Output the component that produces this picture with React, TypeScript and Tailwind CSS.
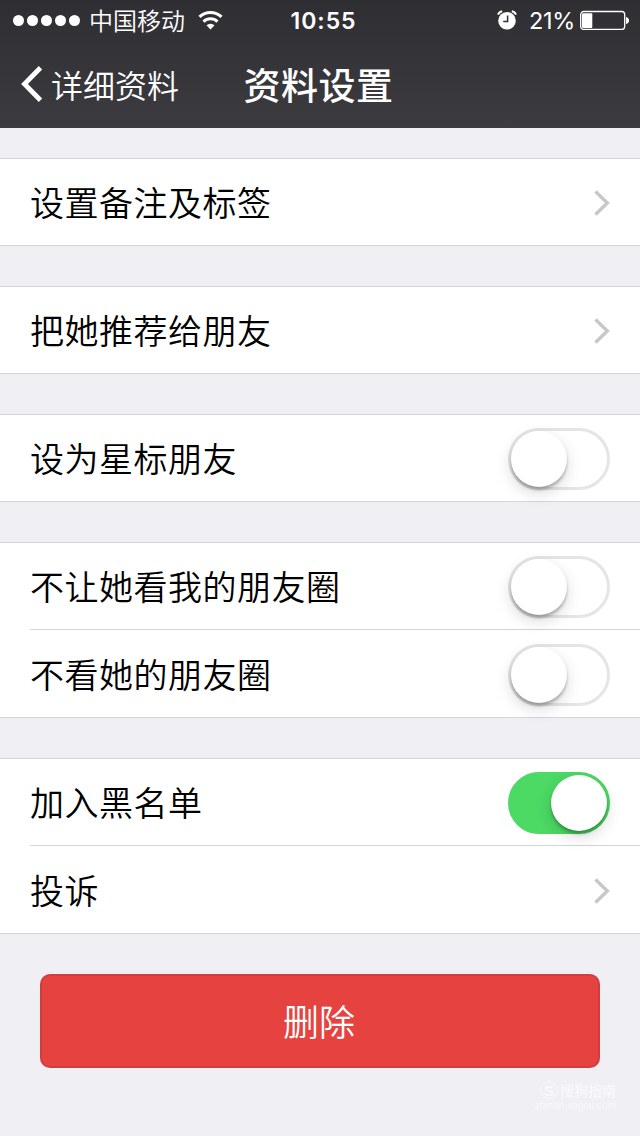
import React, { useState } from 'react';

type Item = {
  label: string;
  kind: 'link' | 'switch';
  on?: boolean;
};

const groups: Item[][] = [
  [{ label: '设置备注及标签', kind: 'link' }],
  [{ label: '把她推荐给朋友', kind: 'link' }],
  [{ label: '设为星标朋友', kind: 'switch' }],
  [
    { label: '不让她看我的朋友圈', kind: 'switch' },
    { label: '不看她的朋友圈', kind: 'switch' },
  ],
  [
    { label: '加入黑名单', kind: 'switch', on: true },
    { label: '投诉', kind: 'link' },
  ],
];

const WifiIcon = () => (
  <svg className="ml-[13px] h-[20px] w-[26px]" viewBox="0 0 26 20" fill="none" stroke="#fff">
    <path d="M1.5 6.8a16.2 16.2 0 0 1 22 0" strokeWidth="3.2" />
    <path d="M5.5 11.6a10.2 10.2 0 0 1 14 0" strokeWidth="3" />
    <path d="M12.5 19.6l-4-4.3a6 6 0 0 1 8 0z" fill="#fff" stroke="none" />
  </svg>
);

const AlarmIcon = () => (
  <svg className="h-[20px] w-[20px]" viewBox="0 0 20 20" fill="none">
    <circle cx="10" cy="10.8" r="8.8" fill="#fff" />
    <path d="M1 4.6A5.5 5.5 0 0 1 5.2 1.2M19 4.6A5.5 5.5 0 0 0 14.8 1.2" stroke="#fff" strokeWidth="1.9" />
    <path d="M10.6 5.4v6.2H6.2" stroke="#303035" strokeWidth="1.5" />
  </svg>
);

const BatteryIcon = () => (
  <svg className="ml-[5px] h-[20px] w-[50px]" viewBox="0 0 50 20">
    <rect x="0.7" y="1.5" width="44" height="18" rx="3" fill="none" stroke="#fff" strokeWidth="1.3" />
    <rect x="2" y="3.3" width="10.3" height="14.6" rx="1" fill="#fff" />
    <path d="M46 6.9c2 .4 3 1.8 3 3.6s-1 3.2-3 3.6z" fill="#fff" />
  </svg>
);

const Chevron = () => (
  <svg className="h-[26px] w-[17px]" viewBox="0 0 17 26" fill="none" stroke="#c7c7cc" strokeWidth="3.4">
    <path d="M2.5 1.5L14.3 13L2.5 24.5" />
  </svg>
);

const Switch: React.FC<{ initial?: boolean }> = ({ initial = false }) => {
  const [on, setOn] = useState(initial);

  return (
    <button
      role="switch"
      aria-checked={on}
      onClick={() => setOn(!on)}
      className={`flex h-[62px] w-[102px] items-center rounded-full border-[3px] ${
        on ? 'justify-end border-[#4cd964] bg-[#4cd964]' : 'justify-start border-[#e5e5e5] bg-white'
      }`}
    >
      <span className="h-[56px] w-[56px] rounded-full bg-white shadow-[0_3px_3px_rgba(0,0,0,0.25),0_6px_16px_rgba(0,0,0,0.15)]" />
    </button>
  );
};

const StatusBar = () => (
  <div className="grid h-10 grid-cols-[1fr_auto_1fr] items-center pl-[13px] pr-[10px] text-[24px] leading-none">
    <div className="flex items-center">
      <div className="flex gap-[3px] pt-px">
        {[0, 1, 2, 3, 4].map(i => (
          <span key={i} className="h-[11px] w-[11px] rounded-full bg-white" />
        ))}
      </div>
      <span className="ml-[9px] font-[350]">中国移动</span>
      <WifiIcon />
    </div>
    <span className="pl-1 pt-0.5 font-[Inter] text-[23px] font-semibold tracking-[1px]">10:55</span>
    <div className="flex items-center justify-end">
      <AlarmIcon />
      <span className="ml-3 pt-0.5 font-[Inter] text-[23.5px] tracking-[-0.3px]">21%</span>
      <BatteryIcon />
    </div>
  </div>
);

export default function App() {
  return (
    <div className="flex h-[1136px] w-[640px] flex-col overflow-hidden bg-[#efeff4] font-['Noto_Sans_CJK_SC',sans-serif]">
      <header className="h-32 bg-linear-to-b from-[#2f2e33] to-[#3c3b40] text-white">
        <StatusBar />
        <div className="grid h-[88px] grid-cols-[220px_197px_223px] items-center">
          <button className="flex items-center pl-5">
            <svg className="h-[36px] w-[24px]" viewBox="0 0 24 36" fill="none" stroke="#fff" strokeWidth="4.8">
              <path d="M20.5 1.8L4.5 18L20.5 34.2" />
            </svg>
            <span className="ml-[7px] text-[32px] leading-none font-[350]">详细资料</span>
          </button>
          <h1 className="text-center text-[37px] leading-none font-medium tracking-[0.5px]">资料设置</h1>
        </div>
      </header>

      <main className="flex flex-col gap-10 pt-[30px]">
        {groups.map((items, g) => (
          <section key={g} className="border-y border-[#d5d5d9] bg-white">
            {items.map((item, i) => (
              <div key={item.label} className="pl-[30px]">
                <div
                  className={`flex items-center justify-between pr-[30px] ${
                    i > 0 ? 'h-[88px] border-t border-[#d5d5d9]' : 'h-[86px]'
                  }`}
                >
                  <span className="text-[34px] leading-none font-[350] tracking-[0.5px] text-black">{item.label}</span>
                  <div className="pt-0.5">
                    {item.kind === 'switch' ? <Switch initial={item.on} /> : <Chevron />}
                  </div>
                </div>
              </div>
            ))}
          </section>
        ))}

        <button className="mx-10 h-[94px] rounded-[10px] border-2 border-[#d03f40] bg-[#e64340] pr-0.5 pb-0.5 text-[36px] leading-none font-[350] text-white">
          删除
        </button>
      </main>

      <footer className="mt-3 flex flex-col items-end pr-6 text-[#f9f9fc]">
        <div className="flex items-center gap-0.5">
          <span className="flex h-[18px] w-[18px] items-center justify-center rounded-full border border-[#f9f9fc] font-['Liberation_Sans'] text-[15px] leading-none font-bold">
            S
          </span>
          <span className="text-[14px] leading-5 font-medium">搜狗指南</span>
        </div>
        <span className="font-['Liberation_Sans'] text-[10px] leading-3">zhinan.sogou.com</span>
      </footer>
    </div>
  );
}
